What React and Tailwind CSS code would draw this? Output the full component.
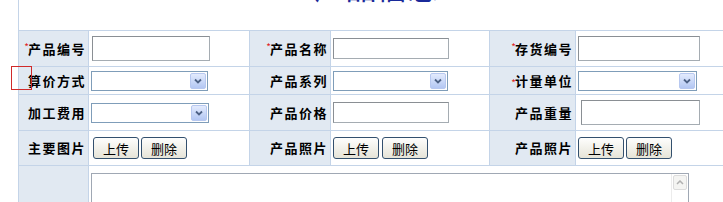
import React from 'react';

const font = { fontFamily: '"Noto Sans CJK SC", "Noto Sans", sans-serif' };

const Label = ({ text, req }) => (
  <div className="flex items-center justify-end bg-[#e1e9f2] pr-[2px] text-[13px] font-bold tracking-[1.5px] text-black">
    {req && <span className="-mr-[1px] mt-[11px] self-start text-[10px] font-normal leading-none tracking-normal text-[#e02020]">*</span>}
    <span>{text}</span>
  </div>
);

const TextInput = ({ w, h, ml = 'ml-[3px]' }) => (
  <input
    type="text"
    className={`${w} ${h} ${ml} border border-[#a5acb2] border-t-[#8a8f94] border-l-[#8a8f94] bg-white outline-none`}
  />
);

const Select = ({ w }) => (
  <div className={`ml-[2px] flex h-[20px] ${w} items-stretch justify-end border border-[#7f9db9] bg-white p-px`}>
    <div className="flex w-[16px] items-center justify-center rounded-[2px] border border-[#b7c8f0] bg-gradient-to-b from-[#e3ebfd] to-[#b3c7f3]">
      <svg width="8" height="6" viewBox="0 0 8 6">
        <path d="M1 1.5 L4 4.5 L7 1.5" stroke="#4d6185" strokeWidth="1.8" fill="none" />
      </svg>
    </div>
  </div>
);

const Btn = ({ children }) => (
  <button className="flex h-[22px] w-[46px] items-center justify-center rounded-[3px] border border-[#33506e] bg-gradient-to-b from-[#fefefd] to-[#e6e4d8] text-[13px] leading-none text-black">
    {children}
  </button>
);

const Cell = ({ children, cls = '' }) => (
  <div className={`flex items-center bg-white ${cls}`}>{children}</div>
);

export default function App() {
  return (
    <div className="relative h-[202px] w-[723px] overflow-hidden bg-white pl-[18px]" style={font}>
      <div className="w-[716px] border-l border-[#c4d4e8]">
        {/* title */}
        <div className="h-[30px] overflow-hidden">
          <div className="-mt-[29px] text-center text-[31px] leading-[30px] text-[#1a2a9a]">产品信息</div>
        </div>

        {/* form grid */}
        <div className="grid grid-cols-[69px_160px_80px_158px_85px_158px] grid-rows-[35px_27px_35px_34px_40px] gap-px border-t border-[#c4d4e8] bg-[#c4d4e8]">
          <Label text="产品编号" req />
          <Cell><TextInput w="w-[118px]" h="h-[25px]" /></Cell>
          <Label text="产品名称" req />
          <Cell><TextInput w="w-[116px]" h="h-[21px]" ml="ml-[2px]" /></Cell>
          <Label text="存货编号" req />
          <Cell><TextInput w="w-[122px]" h="h-[25px]" ml="ml-[2px]" /></Cell>

          <Label text="算价方式" />
          <Cell><Select w="w-[117px]" /></Cell>
          <Label text="产品系列" />
          <Cell><Select w="w-[115px]" /></Cell>
          <Label text="计量单位" req />
          <Cell><Select w="w-[119px]" /></Cell>

          <Label text="加工费用" />
          <Cell><Select w="w-[118px]" /></Cell>
          <Label text="产品价格" />
          <Cell><TextInput w="w-[116px]" h="h-[21px]" ml="ml-[2px]" /></Cell>
          <Label text="产品重量" />
          <Cell><TextInput w="w-[119px]" h="h-[25px]" ml="ml-[5px]" /></Cell>

          <Label text="主要图片" />
          <Cell cls="gap-[2px] pl-[4px]"><Btn>上传</Btn><Btn>删除</Btn></Cell>
          <Label text="产品照片" />
          <Cell cls="gap-[3px] pl-[2px]"><Btn>上传</Btn><Btn>删除</Btn></Cell>
          <Label text="产品照片" />
          <Cell cls="gap-[2px] pl-[2px]"><Btn>上传</Btn><Btn>删除</Btn></Cell>

          <div className="bg-[#e1e9f2]" />
          <div className="col-span-5 bg-white pl-[2px] pt-[7px]">
            <div className="flex h-[60px] w-[598px] justify-end border border-[#a0a8b4] bg-white">
              <div className="w-[17px] border-l border-[#ececec] bg-white p-px">
                <div className="flex h-[15px] items-center justify-center rounded-[2px] border border-[#dcdcdc] bg-[#f4f4f2]">
                  <svg width="8" height="5" viewBox="0 0 8 5">
                    <path d="M1 4 L4 1 L7 4" stroke="#b0b0b0" strokeWidth="1.5" fill="none" />
                  </svg>
                </div>
              </div>
            </div>
          </div>
        </div>
      </div>

      {/* red marker */}
      <div className="absolute left-[11px] top-[66px] h-[24px] w-[21px] border border-[#d02a2a]" />
    </div>
  );
}
